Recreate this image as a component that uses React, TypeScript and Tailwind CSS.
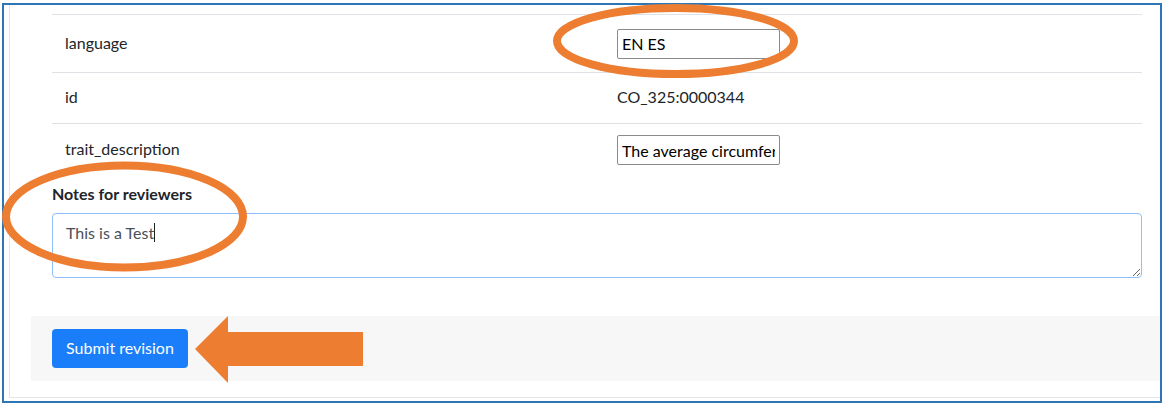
import React from "react";

const rows = [
  { label: "language", kind: "input", value: "EN ES", h: "h-[58px]" },
  { label: "id", kind: "text", value: "CO_325:0000344", h: "h-[51px]" },
  { label: "trait_description", kind: "input", value: "The average circumference of the stem", h: "h-[52px]" },
];

function Annotations() {
  return (
    <svg className="absolute left-0 top-0 pointer-events-none" width="1162" height="404" viewBox="0 0 1162 404">
      <ellipse cx="675.5" cy="41" rx="118.5" ry="33" fill="none" stroke="#ed7d31" strokeWidth="8" />
      <ellipse cx="124.5" cy="216.5" rx="118.5" ry="51" fill="none" stroke="#ed7d31" strokeWidth="8" />
      <polygon points="195,349 228,316 228,332 363,332 363,366 228,366 228,383" fill="#ed7d31" />
    </svg>
  );
}

export default function App() {
  return (
    <div className="relative w-[1162px] h-[404px] bg-white overflow-hidden font-['Lato',sans-serif] text-[#212529]">
      {/* screenshot frame */}
      <div className="mt-[3px] ml-[2px] w-[1160px] h-[400px] border-2 border-[#2e75b6]">
        <div className="ml-[5px] h-[393px] border-l border-b border-[#e3e6ea] flex flex-col">
          {/* review table */}
          <div className="ml-[42px] mr-[18px] mt-[9px] border-t border-[#dee2e6]">
            {rows.map((r, i) => (
              <div
                key={r.label}
                className={`flex items-center ${r.h} ${i < rows.length - 1 ? "border-b border-[#dee2e6]" : ""}`}
              >
                <div className="w-[565px] pl-[13px] text-[16px] leading-[24px] -mt-[2px]">{r.label}</div>
                {r.kind === "input" ? (
                  <input
                    readOnly
                    value={r.value}
                    className="w-[163px] h-[30px] border border-[#8a8a8a] rounded-[2px] px-[4px] text-[16px] text-black bg-white outline-none"
                  />
                ) : (
                  <div className="text-[16px] leading-[24px] -mt-[2px]">{r.value}</div>
                )}
              </div>
            ))}
          </div>

          {/* notes */}
          <div className="ml-[42px] mr-[18px] mt-[6px]">
            <div className="text-[16px] font-bold leading-[24px]">Notes for reviewers</div>
            <div className="relative mt-[7px]">
              <textarea
                readOnly
                defaultValue="This is a Test"
                className="block w-full h-[65px] border border-[#8fc0fb] rounded-[4px] px-[13px] py-[7px] text-[16px] leading-[24px] text-[#495057] outline-none"
              />
              <span className="absolute left-[102px] top-[10px] w-px h-[19px] bg-[#222]" />
            </div>
          </div>

          {/* footer band */}
          <div className="ml-[21px] mt-[38px] h-[65px] bg-[#f7f7f7] flex items-center pl-[21px]">
            <button className="h-[39px] px-[14px] rounded-[4px] bg-[#1a7efb] text-white text-[16px] -mt-[1px]">
              Submit revision
            </button>
          </div>
        </div>
      </div>
      <Annotations />
    </div>
  );
}
